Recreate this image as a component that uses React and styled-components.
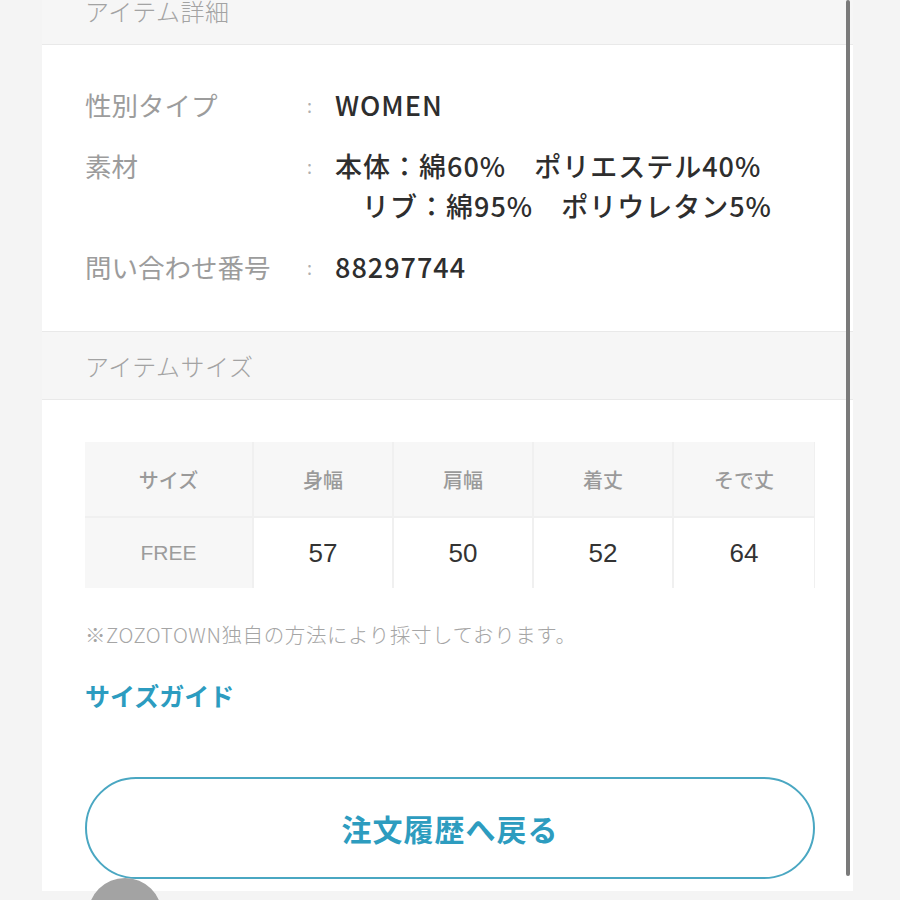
import React from 'react'
import styled, { createGlobalStyle } from 'styled-components'

const GlobalStyle = createGlobalStyle`
  html, body {
    margin: 0;
    padding: 0;
    background: #f4f4f4;
    font-family: "Noto Sans CJK JP", "Noto Sans", sans-serif;
    overflow: hidden;
  }
`

const details = [
  { label: '性別タイプ', lines: ['WOMEN'] },
  { label: '素材', lines: ['本体：綿60%　ポリエステル40%', 'リブ：綿95%　ポリウレタン5%'] },
  { label: '問い合わせ番号', lines: ['88297744'] },
]

const headers = ['サイズ', '身幅', '肩幅', '着丈', 'そで丈']
const sizes = [{ name: 'FREE', values: ['57', '50', '52', '64'] }]

export default function App() {
  return (
    <Screen>
      <GlobalStyle />
      <Card>
        <SectionHeader $top>アイテム詳細</SectionHeader>
        <DetailBody>
          {details.map((d) => (
            <DetailRow key={d.label}>
              <Label>{d.label}</Label>
              <Colon>:</Colon>
              <Value>
                {d.lines.map((line, i) => (
                  <ValueLine key={line} $indent={i > 0}>{line}</ValueLine>
                ))}
              </Value>
            </DetailRow>
          ))}
        </DetailBody>
        <SectionHeader>アイテムサイズ</SectionHeader>
        <SizeBody>
          <SizeTable>
            {headers.map((h) => (
              <HeadCell key={h}>{h}</HeadCell>
            ))}
            {sizes.map((s) => (
              <React.Fragment key={s.name}>
                <NameCell>{s.name}</NameCell>
                {s.values.map((v, i) => (
                  <ValueCell key={i}>{v}</ValueCell>
                ))}
              </React.Fragment>
            ))}
          </SizeTable>
          <Note>※ZOZOTOWN独自の方法により採寸しております。</Note>
          <GuideLink>サイズガイド</GuideLink>
          <BackButton>注文履歴へ戻る</BackButton>
        </SizeBody>
      </Card>
      <ScrollBar />
      <FloatDot />
    </Screen>
  )
}

const Screen = styled.div`
  position: relative;
  width: 900px;
  height: 900px;
  overflow: hidden;
  background: #f4f4f4;
`

const Card = styled.div`
  margin-left: 42px;
  width: 811px;
  display: flex;
  flex-direction: column;
`

const SectionHeader = styled.div`
  height: 69px;
  margin-top: ${(p) => (p.$top ? '-24px' : '0')};
  box-sizing: border-box;
  padding-left: 43px;
  display: flex;
  align-items: center;
  background: #f6f6f6;
  border-top: 1px solid #e9e9e9;
  border-bottom: 1px solid #e9e9e9;
  color: #a3a3a3;
  font-size: 24px;
  font-weight: 300;
  letter-spacing: 0.5px;
`

const DetailBody = styled.div`
  background: #fff;
  padding: 40px 0 44px 43px;
  display: flex;
  flex-direction: column;
  gap: 21px;
`

const DetailRow = styled.div`
  display: flex;
  align-items: flex-start;
  line-height: 40px;
`

const Label = styled.div`
  width: 222px;
  color: #9c9c9c;
  font-size: 26.5px;
  font-weight: 400;
`

const Colon = styled.div`
  width: 28px;
  color: #b0b0b0;
  font-size: 18px;
`

const Value = styled.div`
  display: flex;
  flex-direction: column;
  color: #2e2e2e;
  font-size: 27px;
  font-weight: 500;
  letter-spacing: 1px;
`

const ValueLine = styled.div`
  padding-left: ${(p) => (p.$indent ? '27px' : '0')};
  white-space: pre;
`

const SizeBody = styled.div`
  background: #fff;
  padding: 42px 38px 12px 43px;
  display: flex;
  flex-direction: column;
`

const SizeTable = styled.div`
  display: grid;
  grid-template-columns: 167px 138px 138px 138px 140px;
  grid-template-rows: 74px 70px;
  gap: 2px;
  background: #f0f0f0;
`

const HeadCell = styled.div`
  display: flex;
  align-items: center;
  justify-content: center;
  background: #f7f7f7;
  color: #9a9a9a;
  font-size: 20px;
  font-weight: 500;
`

const NameCell = styled(HeadCell)`
  font-size: 21px;
  font-family: "Liberation Sans", "Noto Sans CJK JP", sans-serif;
  color: #9c9c9c;
`

const ValueCell = styled.div`
  display: flex;
  align-items: center;
  justify-content: center;
  background: #fff;
  color: #333;
  font-size: 26px;
  font-family: "Liberation Sans", "Noto Sans CJK JP", sans-serif;
`

const Note = styled.div`
  margin-top: 31px;
  color: #a5a5a5;
  font-size: 20.5px;
  font-weight: 300;
  letter-spacing: 0.6px;
`

const GuideLink = styled.div`
  margin-top: 28px;
  color: #2c9cc0;
  font-size: 25px;
  font-weight: 700;
`

const BackButton = styled.div`
  margin-top: 64px;
  height: 102px;
  box-sizing: border-box;
  border: 2px solid #4aa7c2;
  border-radius: 51px;
  display: flex;
  align-items: center;
  justify-content: center;
  color: #2d9cbf;
  font-size: 30px;
  font-weight: 700;
  letter-spacing: 1px;
`

const ScrollBar = styled.div`
  position: absolute;
  left: 846px;
  top: 0;
  width: 4px;
  height: 876px;
  border-radius: 2px;
  background: #7a7a7a;
`

const FloatDot = styled.div`
  position: absolute;
  left: 88px;
  top: 878px;
  width: 74px;
  height: 74px;
  border-radius: 50%;
  background: #a3a3a3;
`
